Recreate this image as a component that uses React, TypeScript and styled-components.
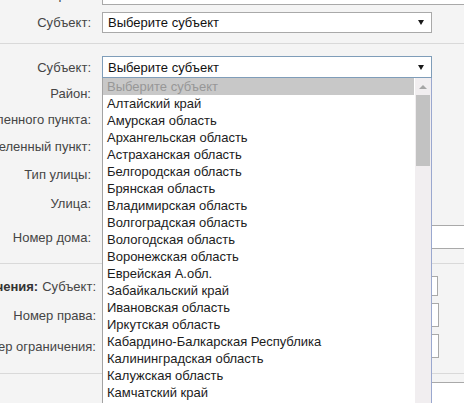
import React from 'react';
import styled, { createGlobalStyle } from 'styled-components';

const GlobalStyle = createGlobalStyle`
  html, body {
    margin: 0;
    padding: 0;
    height: 100%;
    overflow: hidden;
    background: #f4f4f4;
  }
  body {
    font-family: "Liberation Sans", Arial, sans-serif;
    font-size: 13px;
    color: #444;
  }
`;

// the form is scrolled a little, so the first row is cut at the top
const Form = styled.div`
  margin-top: -28px;
`;

const Section = styled.section<{ $pt: number; $pb: number }>`
  display: flex;
  flex-direction: column;
  padding: ${(p) => p.$pt}px 0 ${(p) => p.$pb}px;
  border-bottom: 1px solid #d9d9d9;
`;

const Row = styled.div<{ $labelW: number; $mt?: number }>`
  display: grid;
  grid-template-columns: ${(p) => p.$labelW}px auto;
  column-gap: ${(p) => 102 - p.$labelW}px;
  align-items: center;
  margin-top: ${(p) => p.$mt ?? 0}px;
`;

const Label = styled.label`
  display: flex;
  justify-content: flex-end;
  gap: 4px;
  white-space: nowrap;
  color: #454545;
`;

const GroupTitle = styled.b`
  color: #333;
`;

const Input = styled.div<{ $w: number; $h: number }>`
  box-sizing: border-box;
  width: ${(p) => p.$w}px;
  height: ${(p) => p.$h}px;
  border: 1px solid #a9a9a9;
  background: #fff;
`;

const SelectWrap = styled.div`
  position: relative;
  width: 330px;
`;

const Select = styled.div<{ $h: number; $focus?: boolean }>`
  box-sizing: border-box;
  width: 330px;
  height: ${(p) => p.$h}px;
  display: flex;
  align-items: center;
  justify-content: space-between;
  padding: 0 7px 0 5px;
  border: 1px solid ${(p) => (p.$focus ? '#7f9db9' : '#a9a9a9')};
  background: #fff;
  color: #111;
  white-space: nowrap;
`;

const Arrow = styled.span`
  width: 0;
  height: 0;
  border-left: 3px solid transparent;
  border-right: 3px solid transparent;
  border-top: 5px solid #1a1a1a;
`;

const Listbox = styled.div`
  position: absolute;
  left: 0;
  top: 100%;
  z-index: 10;
  box-sizing: border-box;
  width: 330px;
  height: 340px;
  display: flex;
  overflow: hidden;
  background: #fff;
  border-left: 1px solid #a3a3a3;
  border-right: 1px solid #9aa8cf;
`;

const Options = styled.ul`
  flex: 1;
  margin: 0;
  padding: 0;
  list-style: none;
`;

const Option = styled.li<{ $active?: boolean }>`
  height: 17px;
  line-height: 17px;
  padding-left: 4px;
  margin-right: 1px;
  white-space: nowrap;
  color: ${(p) => (p.$active ? '#979797' : '#1c1c1c')};
  background: ${(p) => (p.$active ? '#c8c8c8' : 'transparent')};
`;

const Scrollbar = styled.div`
  width: 16px;
  display: flex;
  flex-direction: column;
  background: #f1eef0;
`;

const ScrollUp = styled.div`
  height: 17px;
  display: flex;
  align-items: center;
  justify-content: center;

  &::before {
    content: '';
    width: 0;
    height: 0;
    border-left: 4px solid transparent;
    border-right: 4px solid transparent;
    border-bottom: 4px solid #a6a6a6;
  }
`;

const Thumb = styled.div`
  height: 71px;
  margin: 0 1px 0 1px;
  background: #c2c2c2;
`;

const regions = [
  'Выберите субъект',
  'Алтайский край',
  'Амурская область',
  'Архангельская область',
  'Астраханская область',
  'Белгородская область',
  'Брянская область',
  'Владимирская область',
  'Волгоградская область',
  'Вологодская область',
  'Воронежская область',
  'Еврейская А.обл.',
  'Забайкальский край',
  'Ивановская область',
  'Иркутская область',
  'Кабардино-Балкарская Республика',
  'Калининградская область',
  'Калужская область',
  'Камчатский край',
  'Карачаево-Черкесская Республика',
  'Кемеровская область',
];

const PLACEHOLDER = 'Выберите субъект';

const addressRows = [
  { label: 'Район:', mt: 5, h: 21 },
  { label: 'Наименование населенного пункта:', mt: 5, h: 21 },
  { label: 'Населенный пункт:', mt: 6, h: 21 },
  { label: 'Тип улицы:', mt: 7, h: 21 },
  { label: 'Улица:', mt: 7, h: 22 },
];

export default function App() {
  return (
    <>
      <GlobalStyle />
      <Form>
        <Section $pt={12} $pb={10}>
          <Row $labelW={91}>
            <Label>Страна:</Label>
            <Input $w={400} $h={21} />
          </Row>
          <Row $labelW={91} $mt={7}>
            <Label>Субъект:</Label>
            <Select $h={21}>
              {PLACEHOLDER}
              <Arrow />
            </Select>
          </Row>
        </Section>

        <Section $pt={12} $pb={14}>
          <Row $labelW={91}>
            <Label>Субъект:</Label>
            <SelectWrap>
              <Select $h={22} $focus>
                {PLACEHOLDER}
                <Arrow />
              </Select>
              <Listbox>
                <Options>
                  {regions.map((name, i) => (
                    <Option key={name} $active={i === 0}>
                      {name}
                    </Option>
                  ))}
                </Options>
                <Scrollbar>
                  <ScrollUp />
                  <Thumb />
                </Scrollbar>
              </Listbox>
            </SelectWrap>
          </Row>
          {addressRows.map((row) => (
            <Row key={row.label} $labelW={91} $mt={row.mt}>
              <Label>{row.label}</Label>
              <Select $h={row.h}>
                <span />
                <Arrow />
              </Select>
            </Row>
          ))}
          <Row $labelW={91} $mt={11}>
            <Label>Номер дома:</Label>
            <Input $w={400} $h={24} />
          </Row>
        </Section>

        <Section $pt={12} $pb={15}>
          <Row $labelW={96}>
            <Label>
              <GroupTitle>Ограничения:</GroupTitle>
              Субъект:
            </Label>
            <Input $w={336} $h={20} />
          </Row>
          <Row $labelW={96} $mt={7}>
            <Label>Номер права:</Label>
            <Input $w={337} $h={24} />
          </Row>
          <Row $labelW={96} $mt={7}>
            <Label>Номер ограничения:</Label>
            <Input $w={337} $h={24} />
          </Row>
        </Section>

        <Section $pt={8} $pb={12}>
          <Row $labelW={96}>
            <Label />
            <Input $w={400} $h={24} />
          </Row>
        </Section>
      </Form>
    </>
  );
}
